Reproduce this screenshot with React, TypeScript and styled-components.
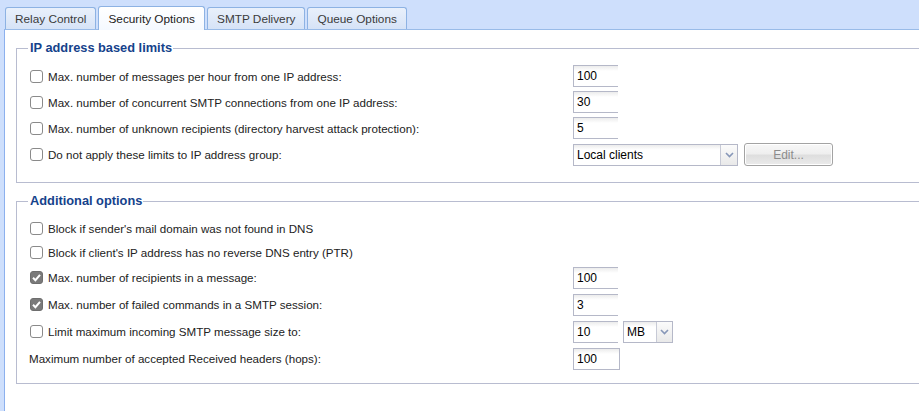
import React from 'react';
import styled, { createGlobalStyle, css } from 'styled-components';

const Global = createGlobalStyle`
  html, body { margin: 0; padding: 0; background: #fff; }
  body {
    font-family: "Liberation Sans", Arial, sans-serif;
    font-size: 11.6px;
    color: #222;
  }
`;

const Page = styled.div`
  display: flex;
  flex-direction: column;
  height: 411px;
  background: #cedffc;
  overflow: hidden;
`;

const TabStrip = styled.div`
  display: flex;
  align-items: flex-end;
  gap: 2px;
  height: 29px;
  padding-left: 5px;
  box-sizing: border-box;
  flex-shrink: 0;
`;

const Tab = styled.div<{ $active?: boolean }>`
  box-sizing: border-box;
  height: 22px;
  padding: 0 9px;
  border: 1px solid #8db2e3;
  border-bottom: none;
  border-radius: 3px 3px 0 0;
  display: flex;
  align-items: center;
  font-size: 11.8px;
  color: #3a3a3a;
  background: linear-gradient(#e9f0fb, #d6e3f7);
  ${(p) =>
    p.$active &&
    css`
      height: 24px;
      margin-bottom: -1px;
      position: relative;
      z-index: 1;
      color: #222;
      background: linear-gradient(#ffffff, #f5f9ff);
    `}
`;

const Panel = styled.div`
  flex: 1;
  margin-left: 4px;
  background: #fff;
  border-top: 1px solid #99bbe8;
  border-left: 1px solid #8cb0ee;
  overflow: hidden;
  padding: 10px 0 0 11px;
`;

const Group = styled.fieldset<{ $pt: number; $pb: number }>`
  margin: 0 -30px 10px 0;
  padding: ${(p) => p.$pt}px 0 ${(p) => p.$pb}px 13px;
  border: 1px solid #b8bcd0;
  min-width: 0;
`;

const Legend = styled.legend`
  margin-left: -2px;
  padding: 0 1px 0 2px;
  font-weight: bold;
  font-size: 12.8px;
  line-height: 16px;
  color: #15428b;
`;

const Row = styled.div<{ $h: number }>`
  display: grid;
  grid-template-columns: 543px auto;
  align-items: center;
  height: ${(p) => p.$h}px;
`;

const Label = styled.label`
  display: flex;
  align-items: center;
  gap: 5px;
  white-space: nowrap;
  color: #222;
`;

const PlainLabel = styled.span`
  margin-left: -1px;
  white-space: nowrap;
  color: #222;
`;

const Check = styled.input.attrs({ type: 'checkbox' })`
  appearance: none;
  margin: 0;
  width: 13px;
  height: 13px;
  box-sizing: border-box;
  border: 1px solid #8a8a8a;
  border-radius: 3px;
  background: #fff;
  &:checked {
    border-color: #6e6e6e;
    background: #7a7a7a
      url("data:image/svg+xml;utf8,<svg xmlns='http://www.w3.org/2000/svg' viewBox='0 0 13 13'><path d='M3 6.8 L5.4 9.2 L10 3.8' fill='none' stroke='white' stroke-width='2'/></svg>")
      center / 13px 13px no-repeat;
  }
`;

const Controls = styled.div`
  display: flex;
  align-items: center;
  gap: 5px;
`;

const TextInput = styled.input<{ $clip?: boolean }>`
  box-sizing: border-box;
  width: ${(p) => (p.$clip ? 45 : 47)}px;
  height: 22px;
  margin: 0;
  padding: 0 3px;
  border: 1px solid #b5b8c8;
  ${(p) => p.$clip && 'border-right: none;'}
  background: #fff linear-gradient(#ececec, #fff 5px);
  font-family: inherit;
  font-size: 12px;
  color: #000;
  outline: none;
`;

const Combo = styled.div`
  display: flex;
  height: 22px;
  box-sizing: border-box;
  border: 1px solid #b5b8c8;
`;

const ComboText = styled.div<{ $w: number }>`
  box-sizing: border-box;
  width: ${(p) => p.$w}px;
  padding: 0 3px;
  display: flex;
  align-items: center;
  font-size: 12px;
  background: #fff linear-gradient(#ececec, #fff 5px);
  color: #000;
`;

const ComboTrigger = styled.div<{ $w: number }>`
  box-sizing: border-box;
  width: ${(p) => p.$w}px;
  border-left: 1px solid #c7cad6;
  display: flex;
  align-items: center;
  justify-content: center;
  background: linear-gradient(#fbfbfb, #e9e9e9);
`;

const Button = styled.button`
  box-sizing: border-box;
  width: 89px;
  height: 23px;
  margin-left: 1px;
  border: 1px solid #a3a3a3;
  border-radius: 3px;
  box-shadow: inset 0 0 0 1px #fff;
  background: linear-gradient(#f7f7f7 0%, #efefef 45%, #dedede 55%, #ebebeb 100%);
  font-family: inherit;
  font-size: 12px;
  color: #8c8c8c;
  padding: 0;
`;

const Chevron = () => (
  <svg width="9" height="6" viewBox="0 0 9 6">
    <path d="M1 1 L4.5 4.5 L8 1" fill="none" stroke="#8797b8" strokeWidth="1.6" />
  </svg>
);

type Item = {
  label: string;
  check?: boolean;
  checked?: boolean;
  value?: string;
  clip?: boolean;
  h: number;
  extra?: 'group' | 'mb';
};

const ipRows: Item[] = [
  { label: 'Max. number of messages per hour from one IP address:', check: true, value: '100', clip: true, h: 26 },
  { label: 'Max. number of concurrent SMTP connections from one IP address:', check: true, value: '30', clip: true, h: 26 },
  { label: 'Max. number of unknown recipients (directory harvest attack protection):', check: true, value: '5', clip: true, h: 26 },
  { label: 'Do not apply these limits to IP address group:', check: true, h: 27, extra: 'group' },
];

const addRows: Item[] = [
  { label: "Block if sender's mail domain was not found in DNS", check: true, h: 24 },
  { label: "Block if client's IP address has no reverse DNS entry (PTR)", check: true, h: 24 },
  { label: 'Max. number of recipients in a message:', check: true, checked: true, value: '100', clip: true, h: 27 },
  { label: 'Max. number of failed commands in a SMTP session:', check: true, checked: true, value: '3', clip: true, h: 27 },
  { label: 'Limit maximum incoming SMTP message size to:', check: true, value: '10', clip: true, h: 27, extra: 'mb' },
  { label: 'Maximum number of accepted Received headers (hops):', value: '100', h: 27 },
];

const OptionRow = ({ item }: { item: Item }) => (
  <Row $h={item.h}>
    {item.check ? (
      <Label>
        <Check defaultChecked={item.checked} />
        {item.label}
      </Label>
    ) : (
      <PlainLabel>{item.label}</PlainLabel>
    )}
    <Controls>
      {item.value !== undefined && <TextInput $clip={item.clip} defaultValue={item.value} />}
      {item.extra === 'mb' && (
        <Combo>
          <ComboText $w={32}>MB</ComboText>
          <ComboTrigger $w={16}>
            <Chevron />
          </ComboTrigger>
        </Combo>
      )}
      {item.extra === 'group' && (
        <>
          <Combo>
            <ComboText $w={146}>Local clients</ComboText>
            <ComboTrigger $w={17}>
              <Chevron />
            </ComboTrigger>
          </Combo>
          <Button disabled>Edit...</Button>
        </>
      )}
    </Controls>
  </Row>
);

export default function App() {
  return (
    <>
      <Global />
      <Page>
        <TabStrip>
          <Tab>Relay Control</Tab>
          <Tab $active>Security Options</Tab>
          <Tab>SMTP Delivery</Tab>
          <Tab>Queue Options</Tab>
        </TabStrip>
        <Panel>
          <Group $pt={7} $pb={14}>
            <Legend>IP address based limits</Legend>
            {ipRows.map((r) => (
              <OptionRow key={r.label} item={r} />
            ))}
          </Group>
          <Group $pt={7} $pb={11}>
            <Legend>Additional options</Legend>
            {addRows.map((r) => (
              <OptionRow key={r.label} item={r} />
            ))}
          </Group>
        </Panel>
      </Page>
    </>
  );
}
